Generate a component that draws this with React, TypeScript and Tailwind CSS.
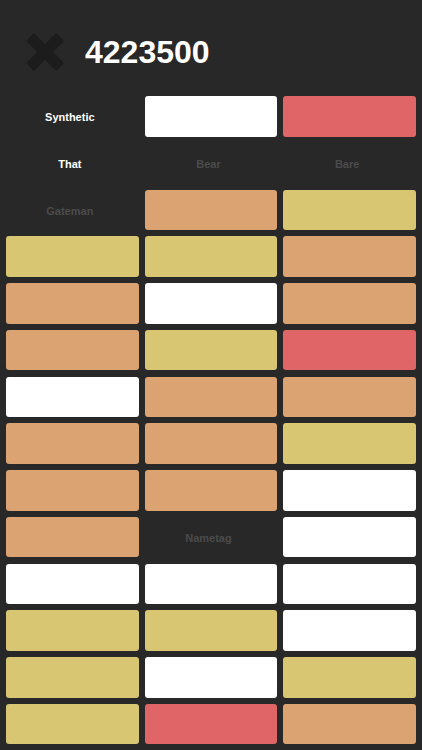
type Cell =
  | { kind: "block"; color: string }
  | { kind: "label"; text: string; dim?: boolean };

const W = "bg-white";
const R = "bg-[#e06567]";
const O = "bg-[#dba371]";
const Y = "bg-[#d9c673]";

const b = (color: string): Cell => ({ kind: "block", color });
const l = (text: string, dim = false): Cell => ({ kind: "label", text, dim });

const rows: Cell[][] = [
  [l("Synthetic"), b(W), b(R)],
  [l("That"), l("Bear", true), l("Bare", true)],
  [l("Gateman", true), b(O), b(Y)],
  [b(Y), b(Y), b(O)],
  [b(O), b(W), b(O)],
  [b(O), b(Y), b(R)],
  [b(W), b(O), b(O)],
  [b(O), b(O), b(Y)],
  [b(O), b(O), b(W)],
  [b(O), l("Nametag", true), b(W)],
  [b(W), b(W), b(W)],
  [b(Y), b(Y), b(W)],
  [b(Y), b(W), b(Y)],
  [b(Y), b(R), b(O)],
];

function CloseIcon() {
  return (
    <svg width="40" height="40" viewBox="0 0 40 40">
      <path d="M5 5 L35 35 M35 5 L5 35" stroke="#1c1c1c" strokeWidth="11" />
    </svg>
  );
}

function GridCell({ cell }: { cell: Cell }) {
  if (cell.kind === "block") {
    return <div className={`h-[40.7px] rounded-[3px] ${cell.color}`} />;
  }
  return (
    <div
      className={`h-[40.7px] flex items-center justify-center pr-[5px] pt-[2px] text-[11px] font-bold ${
        cell.dim ? "text-[#4b4b4b]" : "text-white"
      }`}
    >
      {cell.text}
    </div>
  );
}

export default function App() {
  return (
    <div
      className="w-[422px] h-[750px] bg-[#282828] overflow-hidden"
      style={{ fontFamily: '"Liberation Sans", Arial, sans-serif' }}
    >
      <div className="h-[96px] flex items-center pl-[25px] gap-[20px] pt-[8px]">
        <CloseIcon />
        <span className="text-white text-[32px] font-bold leading-none">4223500</span>
      </div>
      <div className="grid grid-cols-3 gap-x-[6px] gap-y-[6.07px] px-[6px]">
        {rows.flatMap((row, i) =>
          row.map((cell, j) => <GridCell key={`${i}-${j}`} cell={cell} />)
        )}
      </div>
    </div>
  );
}
